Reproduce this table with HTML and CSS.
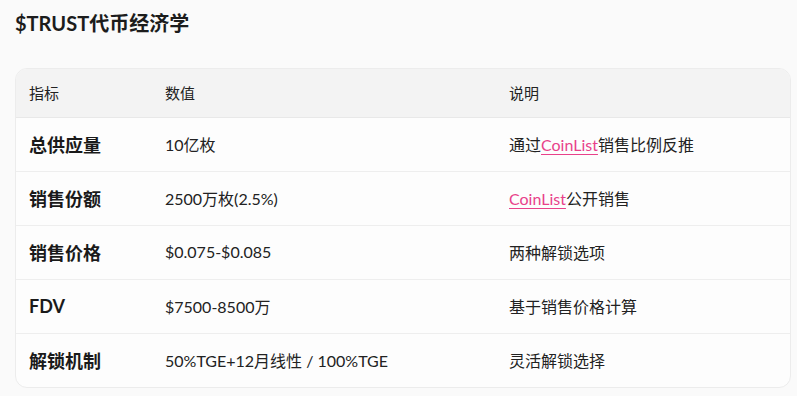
FILE: index.html
```html
<!DOCTYPE html>
<html lang="zh">
<head>
<meta charset="utf-8">
<link rel="stylesheet" href="styles.css">
</head>
<body>
<h2 class="title">$TRUST代币经济学</h2>
<div class="card">
  <table class="tbl">
    <thead>
      <tr><th class="c1">指标</th><th class="c2">数值</th><th class="c3">说明</th></tr>
    </thead>
    <tbody>
      <tr><td class="key">总供应量</td><td>10亿枚</td><td>通过<a class="link">CoinList</a>销售比例反推</td></tr>
      <tr><td class="key">销售份额</td><td>2500万枚(2.5%)</td><td><a class="link">CoinList</a>公开销售</td></tr>
      <tr><td class="key">销售价格</td><td>$0.075-$0.085</td><td>两种解锁选项</td></tr>
      <tr><td class="key">FDV</td><td>$7500-8500万</td><td>基于销售价格计算</td></tr>
      <tr><td class="key">解锁机制</td><td>50%TGE+12月线性 / 100%TGE</td><td>灵活解锁选择</td></tr>
    </tbody>
  </table>
</div>
</body>
</html>
```
FILE: styles.css
```css
html, body {
  margin: 0;
  padding: 0;
  background: #fafafa;
}
body {
  padding: 8px 8px 0 15px;
  font-family: Lato, "Noto Sans CJK SC", sans-serif;
  color: #1f1f1f;
}
.title {
  margin: 0;
  font-size: 20px;
  line-height: 30px;
  font-weight: 700;
  color: #1c1c1c;
}
.card {
  margin-top: 30px;
  width: 774px;
  border: 1px solid #ececec;
  border-radius: 12px;
  overflow: hidden;
  background: #fdfdfd;
}
.tbl {
  width: 100%;
  border-collapse: collapse;
  table-layout: fixed;
}
.c1 { width: 109px; }
.c2 { width: 317px; }
th {
  background: #f3f3f3;
  text-align: left;
  font-weight: 400;
  font-size: 15px;
  color: #222;
  height: 47px;
  padding: 0 14px 1px 13px;
  border-bottom: 1px solid #e8e8e8;
}
td {
  font-size: 16px;
  color: #222;
  height: 51px;
  padding: 0 14px 2px 13px;
  border-bottom: 1px solid #eeeeee;
}
tbody tr:last-child td { border-bottom: none; }
td.key {
  font-size: 18px;
  font-weight: 700;
  color: #1a1a1a;
}
.link {
  color: #e8418a;
  text-decoration: underline;
  text-underline-offset: 3px;
}
```
